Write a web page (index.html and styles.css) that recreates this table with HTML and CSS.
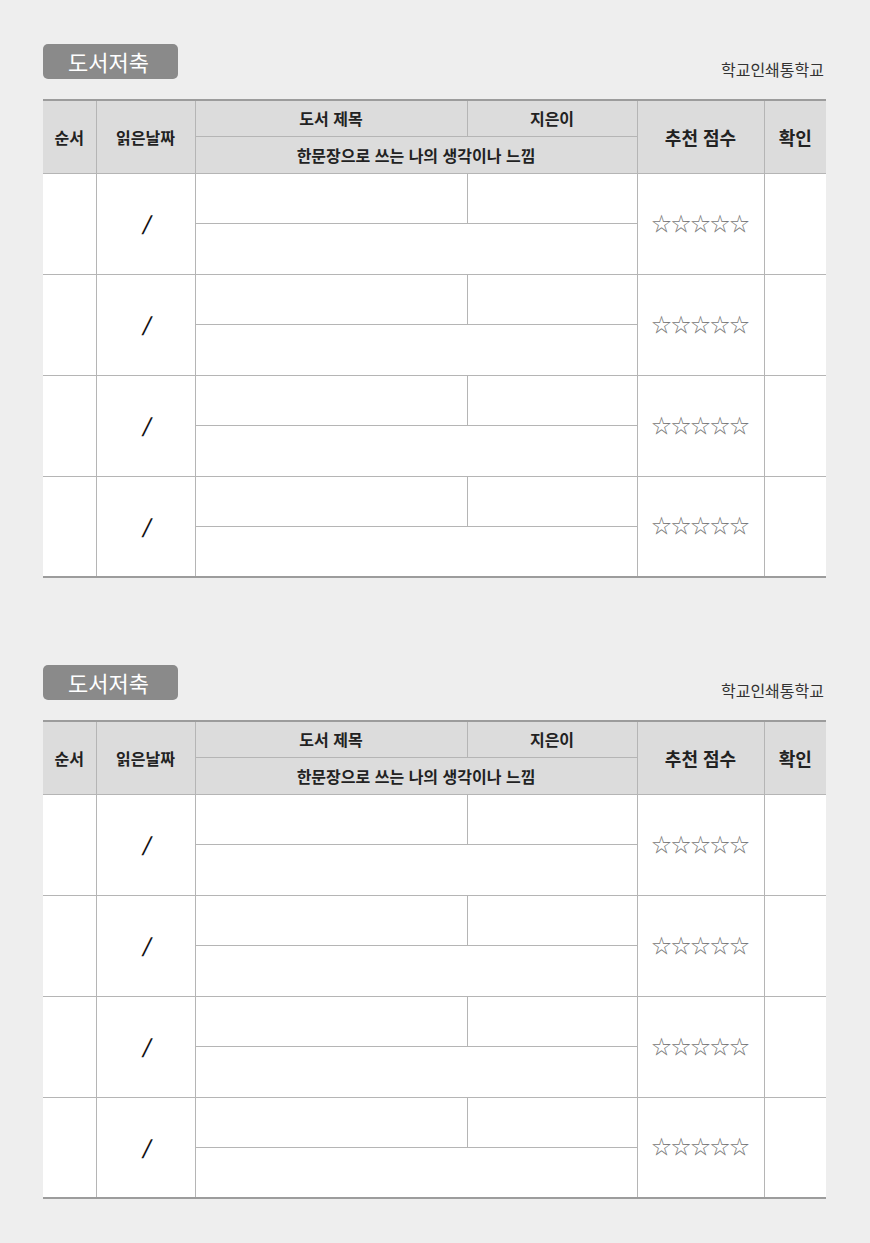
FILE: index.html
```html
<!DOCTYPE html>
<html lang="ko">
<head>
    <meta charset="UTF-8">
    <meta name="viewport" content="width=device-width, initial-scale=1.0">
    <title>도서저축</title>
    <link rel="stylesheet" href="styles.css">
</head>
<body>
    <div class="page">
        <section class="sheet">
            <div class="sheet-head">
                <div class="badge">도서저축</div>
                <div class="school">학교인쇄통학교</div>
            </div>
            <table class="log">
                <colgroup>
                    <col class="c-no"><col class="c-date"><col class="c-title"><col class="c-author"><col class="c-score"><col class="c-check">
                </colgroup>
                <thead>
                    <tr class="h1">
                        <th rowspan="2">순서</th>
                        <th rowspan="2">읽은날짜</th>
                        <th>도서 제목</th>
                        <th>지은이</th>
                        <th rowspan="2" class="big">추천 점수</th>
                        <th rowspan="2" class="big">확인</th>
                    </tr>
                    <tr class="h2">
                        <th colspan="2">한문장으로 쓰는 나의 생각이나 느낌</th>
                    </tr>
                </thead>
                <tbody>
                    <tr class="top"><td rowspan="2"></td><td rowspan="2" class="date">/</td><td></td><td></td><td rowspan="2" class="stars">☆☆☆☆☆</td><td rowspan="2"></td></tr>
                    <tr class="bottom"><td colspan="2"></td></tr>
                    <tr class="top"><td rowspan="2"></td><td rowspan="2" class="date">/</td><td></td><td></td><td rowspan="2" class="stars">☆☆☆☆☆</td><td rowspan="2"></td></tr>
                    <tr class="bottom"><td colspan="2"></td></tr>
                    <tr class="top"><td rowspan="2"></td><td rowspan="2" class="date">/</td><td></td><td></td><td rowspan="2" class="stars">☆☆☆☆☆</td><td rowspan="2"></td></tr>
                    <tr class="bottom"><td colspan="2"></td></tr>
                    <tr class="top"><td rowspan="2"></td><td rowspan="2" class="date">/</td><td></td><td></td><td rowspan="2" class="stars">☆☆☆☆☆</td><td rowspan="2"></td></tr>
                    <tr class="bottom"><td colspan="2"></td></tr>
                </tbody>
            </table>
        </section>

        <section class="sheet">
            <div class="sheet-head">
                <div class="badge">도서저축</div>
                <div class="school">학교인쇄통학교</div>
            </div>
            <table class="log">
                <colgroup>
                    <col class="c-no"><col class="c-date"><col class="c-title"><col class="c-author"><col class="c-score"><col class="c-check">
                </colgroup>
                <thead>
                    <tr class="h1">
                        <th rowspan="2">순서</th>
                        <th rowspan="2">읽은날짜</th>
                        <th>도서 제목</th>
                        <th>지은이</th>
                        <th rowspan="2" class="big">추천 점수</th>
                        <th rowspan="2" class="big">확인</th>
                    </tr>
                    <tr class="h2">
                        <th colspan="2">한문장으로 쓰는 나의 생각이나 느낌</th>
                    </tr>
                </thead>
                <tbody>
                    <tr class="top"><td rowspan="2"></td><td rowspan="2" class="date">/</td><td></td><td></td><td rowspan="2" class="stars">☆☆☆☆☆</td><td rowspan="2"></td></tr>
                    <tr class="bottom"><td colspan="2"></td></tr>
                    <tr class="top"><td rowspan="2"></td><td rowspan="2" class="date">/</td><td></td><td></td><td rowspan="2" class="stars">☆☆☆☆☆</td><td rowspan="2"></td></tr>
                    <tr class="bottom"><td colspan="2"></td></tr>
                    <tr class="top"><td rowspan="2"></td><td rowspan="2" class="date">/</td><td></td><td></td><td rowspan="2" class="stars">☆☆☆☆☆</td><td rowspan="2"></td></tr>
                    <tr class="bottom"><td colspan="2"></td></tr>
                    <tr class="top"><td rowspan="2"></td><td rowspan="2" class="date">/</td><td></td><td></td><td rowspan="2" class="stars">☆☆☆☆☆</td><td rowspan="2"></td></tr>
                    <tr class="bottom"><td colspan="2"></td></tr>
                </tbody>
            </table>
        </section>
    </div>
</body>
</html>
```

FILE: styles.css
```css
* {
    box-sizing: border-box;
    margin: 0;
    padding: 0;
}

body {
    background-color: #eeeeee;
    font-family: "Noto Sans CJK KR", "Noto Sans", sans-serif;
    color: #222;
}

.page {
    padding: 44px 44px 0 43px;
}

.sheet + .sheet {
    margin-top: 87px;
}

.sheet-head {
    display: flex;
    justify-content: space-between;
    align-items: flex-end;
    margin-bottom: 20px;
}

.badge {
    width: 135px;
    height: 35px;
    padding-right: 4px;
    background-color: #8a8a8a;
    border-radius: 5px;
    color: #fff;
    font-size: 22px;
    font-weight: 400;
    line-height: 34px;
    text-align: center;
}

.school {
    font-size: 16px;
    color: #333;
    line-height: 20px;
    margin-right: 2px;
}

/* Reading log table */
.log {
    width: 783px;
    table-layout: fixed;
    border-collapse: collapse;
    border-top: 2px solid #9c9c9c;
    border-bottom: 2px solid #9c9c9c;
}

.c-no { width: 53px; }
.c-date { width: 99px; }
.c-title { width: 272px; }
.c-author { width: 170px; }
.c-score { width: 127px; }
.c-check { width: 62px; }

.log th,
.log td {
    border: 1px solid #b5b5b5;
    text-align: center;
    vertical-align: middle;
}

.log tr > :first-child {
    border-left: none;
}

.log tr > :last-child {
    border-right: none;
}

.log .h2 > :first-child,
.log .bottom > :first-child {
    border-left: 1px solid #b5b5b5;
}

.log th {
    background-color: #dcdcdc;
    font-size: 16px;
    font-weight: 700;
    color: #222;
}

.log th.big {
    font-size: 18px;
}

.h1 { height: 36px; }
.h2 { height: 37px; }

.log td {
    background-color: #fff;
}

.top { height: 50px; }
.bottom { height: 51px; }

.date {
    font-size: 19px;
    font-weight: 700;
    font-style: italic;
    color: #111;
}

.stars {
    font-family: "Noto Sans CJK KR", sans-serif;
    font-size: 19.5px;
    color: #777;
    letter-spacing: 0;
    padding-bottom: 3px;
}
```
